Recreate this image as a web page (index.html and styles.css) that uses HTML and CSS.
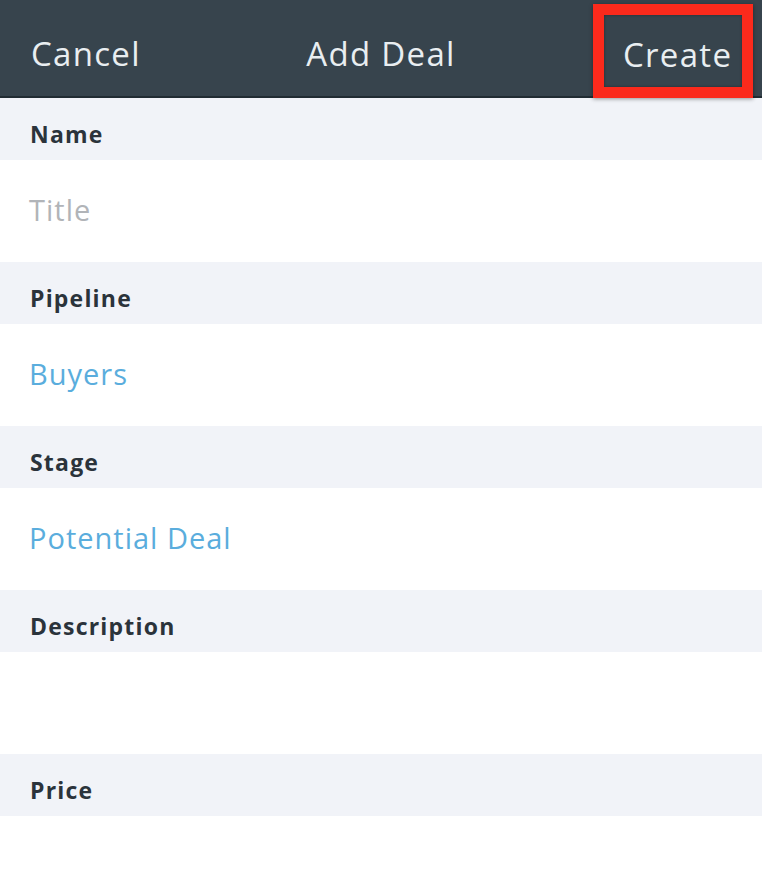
FILE: index.html
```html
<!DOCTYPE html>
<html>
<head>
    <title>Add Deal</title>
    <link rel="stylesheet" href="styles.css">
</head>
<body>
    <header class="topbar">
        <a class="cancel" href="#">Cancel</a>
        <h1>Add Deal</h1>
        <div class="actions">
            <a class="create" href="#">Create</a>
        </div>
    </header>
    <form class="deal-form">
        <div class="section-label">Name</div>
        <div class="field"><span class="placeholder">Title</span></div>

        <div class="section-label">Pipeline</div>
        <div class="field"><span class="value">Buyers</span></div>

        <div class="section-label">Stage</div>
        <div class="field"><span class="value">Potential Deal</span></div>

        <div class="section-label">Description</div>
        <div class="field"></div>

        <div class="section-label">Price</div>
        <div class="field"></div>
    </form>
</body>
</html>
```

FILE: styles.css
```css
body {
    font-family: "Open Sans", Lato, sans-serif;
    background-color: #fff;
    margin: 0;
    padding: 0;
}
.topbar {
    display: grid;
    grid-template-columns: 1fr auto 1fr;
    align-items: center;
    box-sizing: border-box;
    height: 98px;
    padding-top: 8px;
    background-color: #37444d;
    border-bottom: 2px solid #212c33;
    color: #e9eef1;
    font-size: 33px;
    letter-spacing: 1.3px;
}
.topbar a {
    color: #e9eef1;
    text-decoration: none;
}
.cancel {
    padding-left: 31px;
}
h1 {
    margin: 0;
    font-size: 33px;
    font-weight: normal;
}
.actions {
    display: flex;
    justify-content: flex-end;
    align-self: start;
    margin-top: -8px;
}
.create {
    display: flex;
    align-items: center;
    box-sizing: border-box;
    width: 160px;
    height: 94px;
    margin-top: 4px;
    margin-right: 9px;
    padding-left: 19px;
    padding-top: 7px;
    border: 11px solid #fb2a1c;
    box-shadow: 0 1px 4px rgba(0, 0, 0, 0.4), inset 0 0 3px rgba(0, 0, 0, 0.35);
}
.section-label {
    display: flex;
    align-items: center;
    box-sizing: border-box;
    height: 62px;
    padding-left: 30px;
    padding-top: 10px;
    background-color: #f1f3f8;
    color: #2b333b;
    font-size: 23px;
    font-weight: bold;
    letter-spacing: 1.2px;
}
.field {
    display: flex;
    align-items: center;
    box-sizing: border-box;
    height: 102px;
    padding-left: 29px;
    padding-bottom: 4px;
    font-size: 29px;
    letter-spacing: 1px;
}
.placeholder {
    color: #b1b4b8;
}
.value {
    color: #5aaddd;
}
```
